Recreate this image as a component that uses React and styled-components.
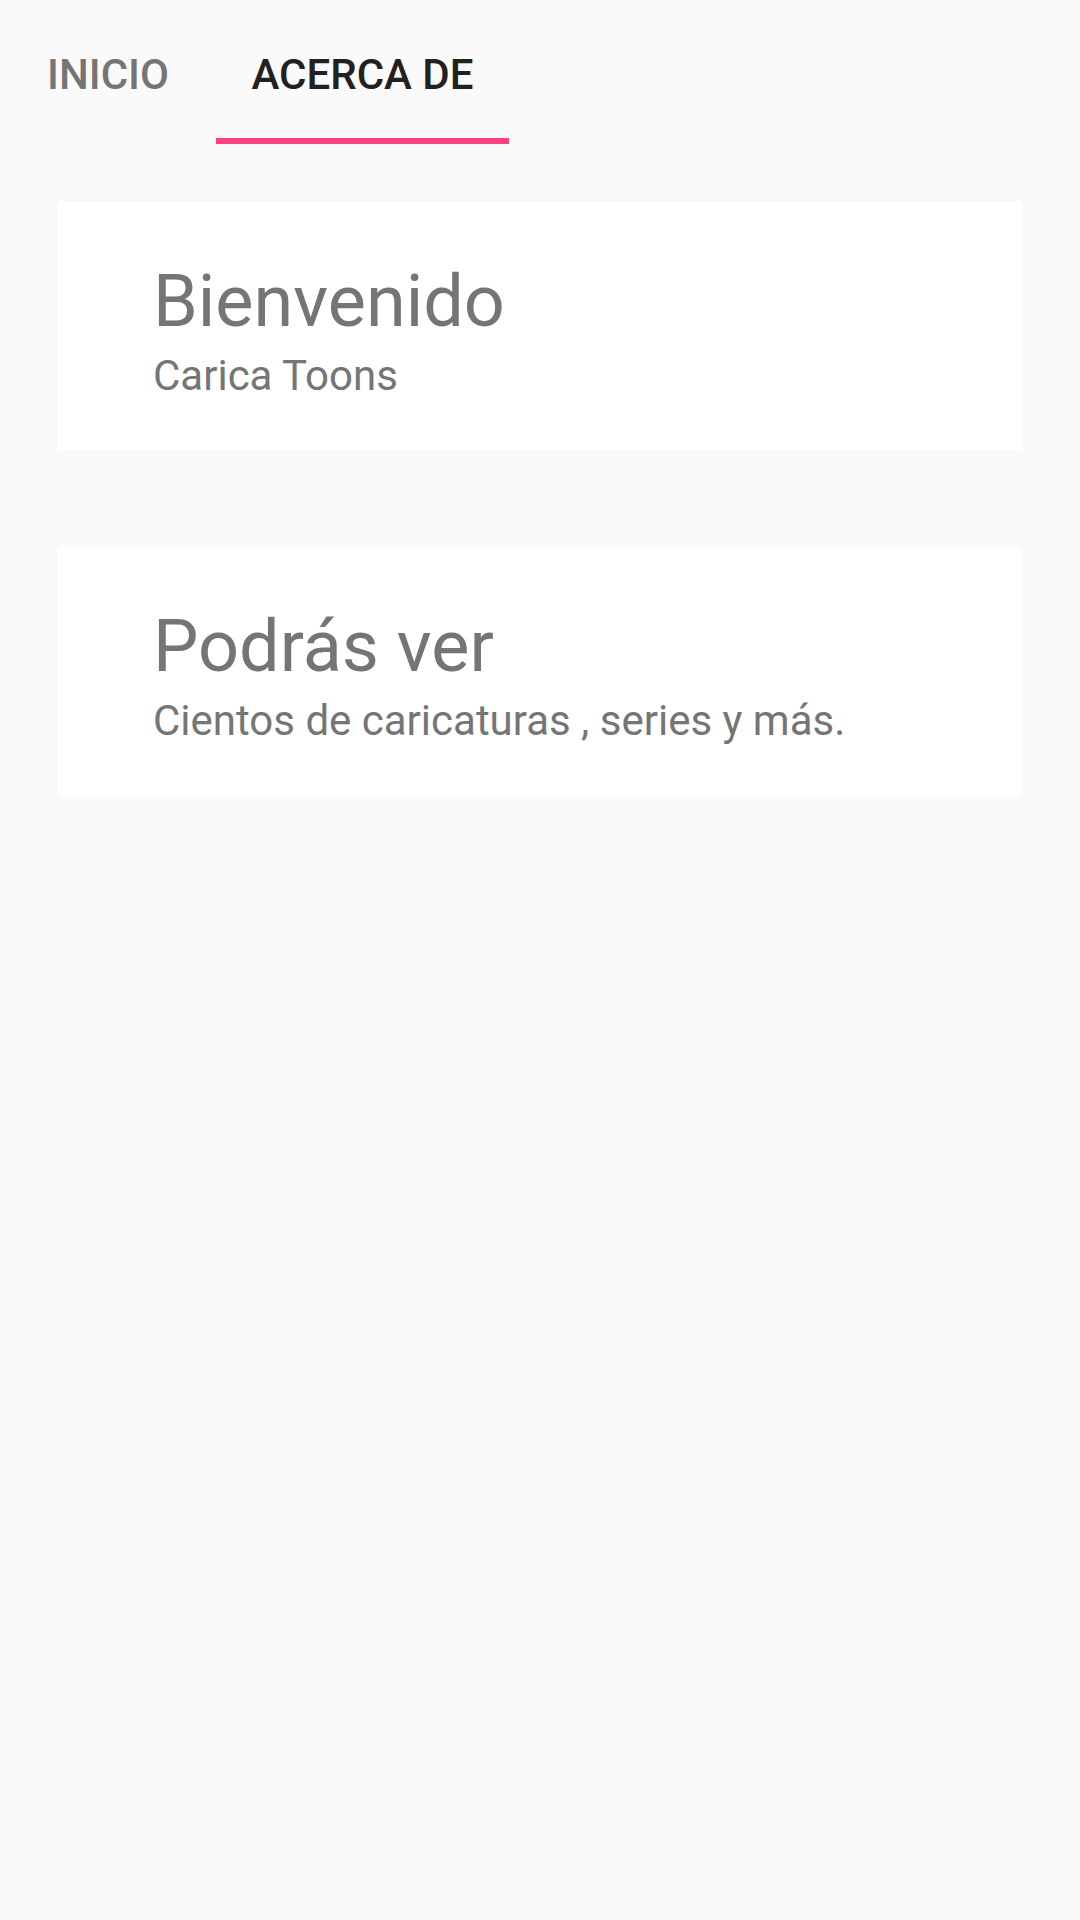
import styled, { createGlobalStyle } from "styled-components";

const GlobalStyle = createGlobalStyle`
    html, body {
        margin: 0;
        padding: 0;
        background: #fafafa;
    }
    body {
        font-family: Roboto, "Liberation Sans", sans-serif;
    }
`;

const Screen = styled.div`
    width: 1080px;
    min-height: 1920px;
    background: #fafafa;
    display: flex;
    flex-direction: column;
`;

const TabBar = styled.nav`
    display: flex;
    height: 144px;
`;

const Tab = styled.div`
    position: relative;
    box-sizing: border-box;
    width: ${p => p.width}px;
    padding-top: 5px;
    display: flex;
    align-items: center;
    justify-content: center;
    font-size: 42px;
    line-height: 1;
    font-weight: 500;
    color: ${p => p.active ? "#212121" : "#757575"};
`;

const Indicator = styled.span`
    position: absolute;
    left: 0;
    right: 0;
    bottom: 0;
    height: 6px;
    background: #ff4081;
`;

const Content = styled.main`
    display: flex;
    flex-direction: column;
    gap: 95px;
    padding: 57px 58px 0 57px;
`;

const Card = styled.section`
    box-sizing: border-box;
    height: ${p => p.height}px;
    background: #ffffff;
    border-radius: 3px;
    box-shadow: 0 0 1px rgba(0, 0, 0, 0.08);
    padding: 65px 40px 0 96px;
`;

const Title = styled.h1`
    margin: 0;
    font-size: 72px;
    line-height: 1;
    font-weight: 400;
    color: #757575;
`;

const Subtitle = styled.p`
    margin: 17px 0 0;
    font-size: 42px;
    line-height: 1;
    font-weight: 400;
    color: #757575;
`;

const cards = [
    { title: "Bienvenido", text: "Carica Toons", height: 250 },
    { title: "Podrás ver", text: "Cientos de caricaturas , series y más.", height: 251 }
];

function App() {
    return (
        <Screen>
            <GlobalStyle />
            <TabBar>
                <Tab width={216}>INICIO</Tab>
                <Tab width={293} active>
                    ACERCA DE
                    <Indicator />
                </Tab>
            </TabBar>
            <Content>
                {cards.map(card => (
                    <Card key={card.title} height={card.height}>
                        <Title>{card.title}</Title>
                        <Subtitle>{card.text}</Subtitle>
                    </Card>
                ))}
            </Content>
        </Screen>
    );
}

export default App;
